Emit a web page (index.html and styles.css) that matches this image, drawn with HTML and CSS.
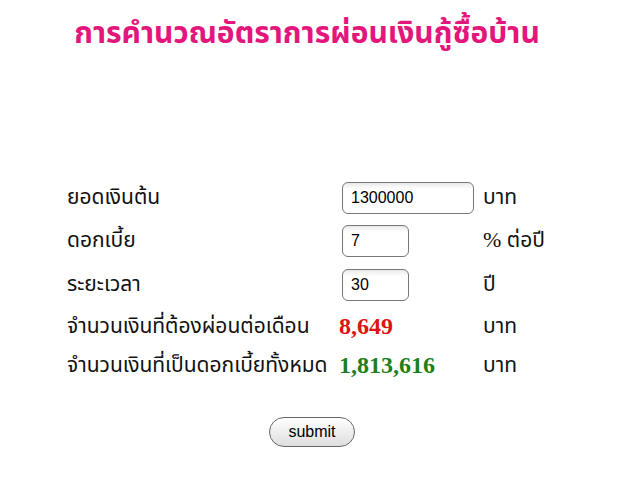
FILE: index.html
```html
<!DOCTYPE html>
<html lang="th">

<head>
    <meta charset="UTF-8">
    <meta name="viewport" content="width=device-width, initial-scale=1.0">
    <title>คำนวณเงินกู้</title>
    <link rel="stylesheet" href="styles.css">
</head>

<body>
    <h1 class="title">การคำนวณอัตราการผ่อนเงินกู้ซื้อบ้าน</h1>
    <form class="calc">
        <table class="grid">
            <tr class="in-row">
                <td class="lbl">ยอดเงินต้น</td>
                <td><input class="box wide" type="text" value="1300000"></td>
                <td class="unit">บาท</td>
            </tr>
            <tr class="in-row">
                <td class="lbl">ดอกเบี้ย</td>
                <td><input class="box" type="text" value="7"></td>
                <td class="unit"><span class="pct">%</span> ต่อปี</td>
            </tr>
            <tr class="in-row">
                <td class="lbl">ระยะเวลา</td>
                <td><input class="box" type="text" value="30"></td>
                <td class="unit">ปี</td>
            </tr>
            <tr class="out-row">
                <td class="lbl">จำนวนเงินที่ต้องผ่อนต่อเดือน</td>
                <td class="val red">8,649</td>
                <td class="unit">บาท</td>
            </tr>
            <tr class="out-row">
                <td class="lbl">จำนวนเงินที่เป็นดอกเบี้ยทั้งหมด</td>
                <td class="val green">1,813,616</td>
                <td class="unit">บาท</td>
            </tr>
        </table>
        <div class="actions">
            <button type="button" class="btn">submit</button>
        </div>
    </form>
</body>

</html>
```

FILE: styles.css
```css
body {
    margin: 0;
    background: #fff;
    font-family: "Noto Sans Thai", "Tlwg Typo", "Garuda", "Loma", "DejaVu Sans", sans-serif;
    color: #111;
}

.title {
    margin: 16px 0 0 0;
    padding-right: 26px;
    text-align: center;
    font-size: 30px;
    font-weight: bold;
    color: #e3167c;
    line-height: 36px;
}

.calc {
    padding-top: 124px;
}

.grid {
    margin-left: 64px;
    border-collapse: collapse;
}

.grid td {
    padding: 0 3px;
    vertical-align: middle;
}

.lbl {
    width: 266px;
    font-size: 21px;
    white-space: nowrap;
}

.in-row td {
    height: 43px;
}

.in-row + .in-row + .in-row td {
    height: 45px;
}

.out-row td {
    height: 39px;
}

.unit {
    padding-left: 6px !important;
    font-size: 21px;
}

.pct {
    font-family: "Liberation Serif", serif;
    font-size: 22px;
}

.box {
    box-sizing: border-box;
    width: 67px;
    height: 32px;
    margin-left: 3px;
    padding: 0 8px;
    border: 1px solid #777;
    border-radius: 6px;
    background: linear-gradient(#e9e9e9, #fff 6px);
    font-family: "Liberation Sans", Arial, sans-serif;
    font-size: 16px;
    color: #000;
}

.box.wide {
    width: 132px;
}

.val {
    width: 135px;
    font-family: "Liberation Serif", serif;
    font-weight: bold;
    font-size: 24px;
}

.red {
    color: #dc1414;
}

.green {
    color: #1d7f1d;
}

.actions {
    margin-top: 32px;
    padding-left: 269px;
}

.btn {
    width: 86px;
    height: 30px;
    border: 1px solid #666;
    border-radius: 15px;
    background: linear-gradient(#ffffff, #dedede);
    font-family: "Liberation Sans", Arial, sans-serif;
    font-size: 16px;
    color: #000;
}
```
